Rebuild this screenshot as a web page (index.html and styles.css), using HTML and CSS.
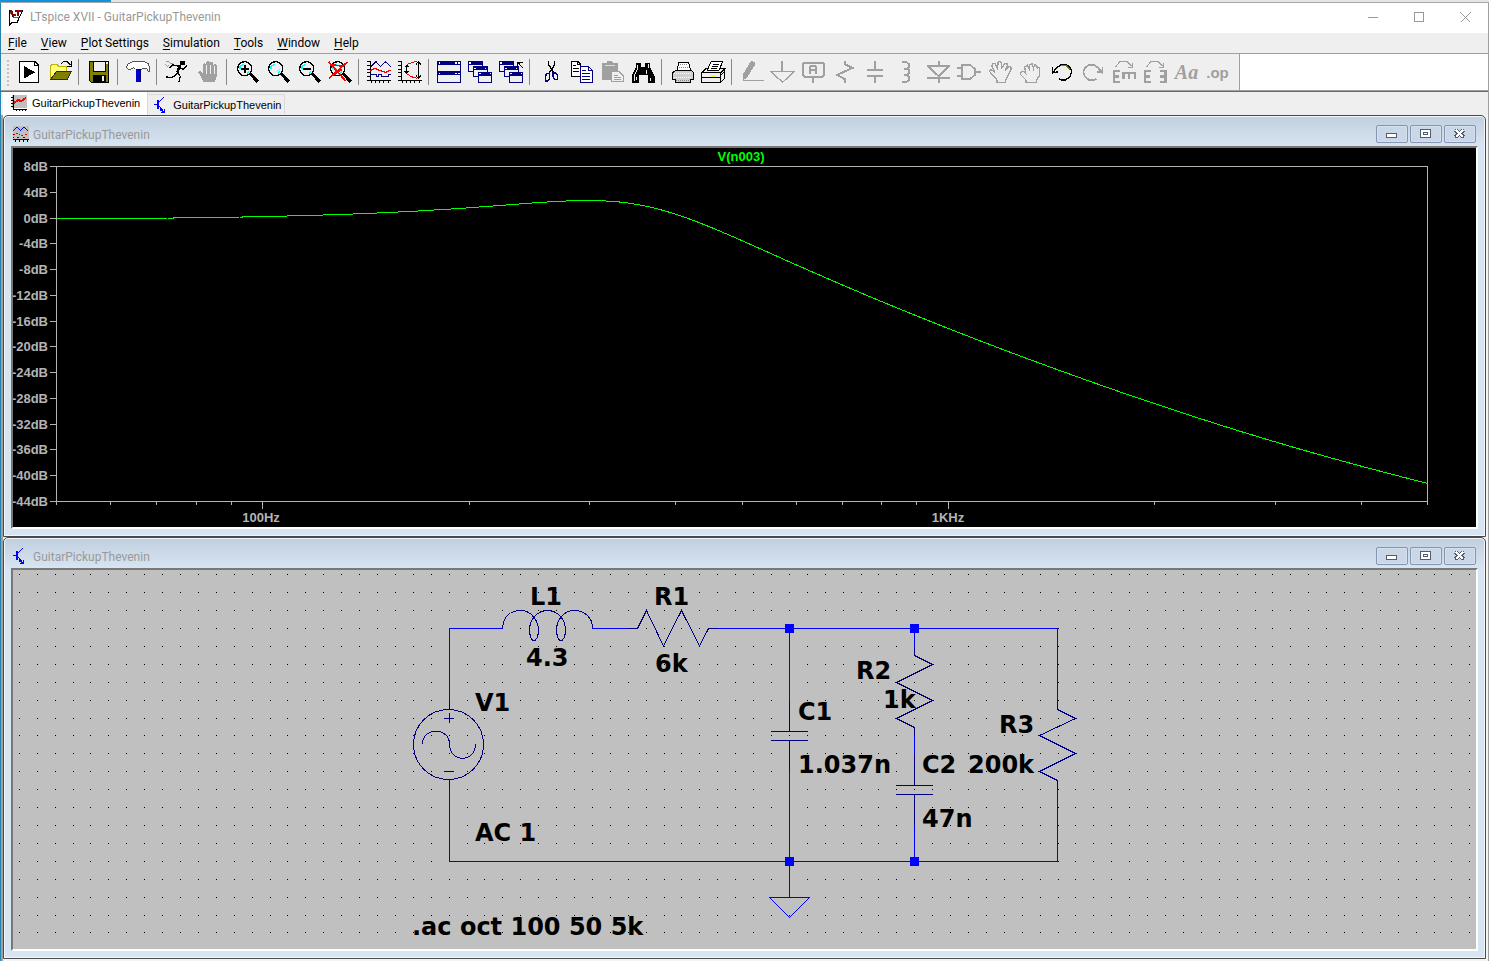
FILE: index.html
```html
<!DOCTYPE html>
<html lang="en">
<head>
<meta charset="utf-8">
<title>LTspice XVII - GuitarPickupThevenin</title>
<link rel="stylesheet" href="styles.css">
</head>
<body>
<div class="desktop-strip"><span class="desktop-accent"></span></div>
<div class="app">
  <header class="titlebar">
    <svg class="app-icon" viewBox="0 0 48 51"><path d="M3 2V49L14 39L28 39L44 3" fill="#fff" stroke="#000" stroke-width="3"/><path d="M9 3L15 20L24 17M21 7H42M32 7L28 22" fill="none" stroke="#8b0000" stroke-width="6"/><path d="M3 4L15 24L33 24" fill="none" stroke="#000" stroke-width="2"/></svg>
    <h1 class="app-title">LTspice XVII - GuitarPickupThevenin</h1>
    <div class="sys-buttons">
      <button aria-label="Minimize"><svg viewBox="0 0 11 11"><path d="M0 5.500H10"/></svg></button>
      <button aria-label="Maximize"><svg viewBox="0 0 11 11"><path d="M.5 .5H9.500V9.500H.5Z"/></svg></button>
      <button aria-label="Close"><svg viewBox="0 0 11 11"><path d="M.5 .5L10.500 10.500M10.500 .5L.5 10.500"/></svg></button>
    </div>
  </header>
  <nav class="menubar">
    <button><u>F</u>ile</button><button><u>V</u>iew</button><button><u>P</u>lot Settings</button><button><u>S</u>imulation</button><button><u>T</u>ools</button><button><u>W</u>indow</button><button><u>H</u>elp</button>
  </nav>
  <div class="toolbar-row">
    <div class="toolbar">
      <span class="grip"></span>
      <div class="group">
        <button aria-label="Run"><svg viewBox="42 0 93 105"><path d="M58 19H105L116 31V82H58Z" fill="#fff" stroke="#000" stroke-width="3"/><path d="M104 18V32H117" fill="none" stroke="#000" stroke-width="3"/><path d="M72 33V71L105 52Z"/></svg></button>
        <button aria-label="Open"><svg viewBox="135 0 93 105"><path d="M151 74V35L156 27H170L176 34H199V48H172Z" fill="#ffff80" stroke="#c0b000" stroke-width="3"/><path d="M151 74L171 48H215L202 74Z" fill="#808000" stroke="#303000" stroke-width="3"/><path d="M185 26L190 20H202L212 31M214 19V33H201" fill="none" stroke="#000" stroke-width="3"/></svg></button>
      </div>
      <div class="group">
        <button aria-label="Save"><svg viewBox="252 0 93 105"><path d="M268 19H326V81H273L268 76Z" fill="#808000" stroke="#000" stroke-width="3"/><path d="M279 19H316V48H279Z" fill="#efefef" stroke="#000" stroke-width="3"/><path d="M280 60H317V81H280Z"/><path d="M306 64H312V77H306Z" fill="#efefef"/><path d="M319 22H324V27H319Z" fill="#efefef"/></svg></button>
      </div>
      <div class="group">
        <button aria-label="Control panel"><svg viewBox="369 0 93 105"><path d="M408 38H424V81H408Z" fill="#00c"/><path d="M418 40H424V81H418Z" fill="#000080"/><path d="M379 36L385 27L398 19H432L444 25L449 36V48H445L438 39H430L424 43H407L402 38L396 40L387 46Z" fill="#fff" stroke="#000" stroke-width="2"/></svg></button>
      </div>
      <div class="group">
        <button aria-label="Run simulation"><svg viewBox="486 0 93 105"><path d="M541 19H555V30H541Z"/><path d="M542 28L532 54L522 64L511 68L497 65M532 53L541 64L537 81M541 34L518 30L509 40M541 38L550 44L561 32" fill="none" stroke="#000" stroke-width="4"/><path d="M541 32L531 53" stroke="#000" stroke-width="8"/><path d="M497 19H505L511 25H520M506 31L500 37M496 29L503 35" fill="none" stroke="#999" stroke-width="3"/></svg></button>
        <button aria-label="Halt"><svg viewBox="579 0 93 105"><path d="M609 80L600 59L594 51L599 47L609 56V29L614 24L618 28V47V23L624 18L629 22V47V24L635 20L640 24V47V30L645 27L650 31V64L645 81Z" fill="#a0a0a0"/><path d="M620 30V58M631 30V58M642 34V58" stroke="#efefef" stroke-width="3"/></svg></button>
      </div>
      <div class="group">
        <button aria-label="Zoom in"><svg viewBox="36 0 93 105"><use href="#lens"/><path d="M74 30V54M62 42H86" stroke="#000" stroke-width="6"/></svg></button>
        <button aria-label="Pan"><svg viewBox="36 0 93 105"><use href="#lens"/><path d="M78 52L88 41" stroke="#5ff" stroke-width="3"/></svg></button>
        <button aria-label="Zoom out"><svg viewBox="36 0 93 105"><use href="#lens"/><path d="M62 42H86" stroke="#000" stroke-width="6"/></svg></button>
        <button aria-label="Zoom to fit"><svg viewBox="36 0 93 105"><use href="#lens"/><path d="M47 20L97 77M103 21L48 70M51 29L94 34M58 62L86 44" fill="none" stroke="#f00" stroke-width="5"/></svg></button>
      </div>
      <div class="group">
        <button aria-label="Autorange"><svg viewBox="432 0 93 105"><use href="#axes"/><path d="M453 35L468 20L481 35L496 20L512 35" fill="none" stroke="#000080" stroke-width="3"/><path d="M450 47L465 40L478 46L496 52L512 45" fill="none" stroke="#f00" stroke-width="4"/><path d="M450 58H469V65H475V58H484V65H505V58H512" fill="none" stroke="#000080" stroke-width="3"/></svg></button>
        <button aria-label="Axis limits"><svg viewBox="525 0 93 105"><use href="#axes" x="93"/><path d="M595 20V70M588 28L595 20L603 28M588 62L595 70L603 62M560 31V54M554 37L560 31L566 37M554 48L560 54L566 48" fill="none" stroke="#000" stroke-width="3"/><path d="M562 28L575 23L591 18M562 57L574 65L591 70" fill="none" stroke="#f00" stroke-width="3"/></svg></button>
      </div>
      <div class="group">
        <button aria-label="Tile windows"><svg viewBox="12 0 93 105"><path d="M22 19H91V49H22ZM22 50H91V82H22Z" fill="#efefef" stroke="#000080" stroke-width="3"/><path d="M21 18H92V30H21ZM21 49H92V61H21Z" fill="#000080"/><path d="M26 22H31V26H26ZM75 22H80V26H75ZM84 22H89V26H84ZM26 53H31V57H26ZM75 53H80V57H75ZM84 53H89V57H84Z" fill="#fff"/></svg></button>
        <button aria-label="Cascade windows"><svg viewBox="105 0 93 105"><use href="#cascade"/></svg></button>
        <button aria-label="Close all windows"><svg viewBox="198 0 93 105"><use href="#cascade" x="93"/><path d="M251 16H282V32H251Z" fill="#efefef"/><path d="M278 21H263V36M264 22L278 39" fill="none" stroke="#000" stroke-width="3"/></svg></button>
      </div>
      <div class="group">
        <button aria-label="Cut"><svg viewBox="313 0 93 105"><path d="M354 18V29L362 42L370 52M372 18V29L364 42L355 52" fill="none" stroke="#000" stroke-width="4"/><path d="M346 58L352 54L357 58V70L351 78H345V66ZM367 54H375L381 62V73H373L367 66Z" fill="none" stroke="#000080" stroke-width="4"/></svg></button>
        <button aria-label="Copy"><svg viewBox="409 0 93 105"><path d="M424 19H444L452 27V65H424Z" fill="#fff" stroke="#000" stroke-width="3"/><path d="M430 30H440M430 39H448M430 48H448M443 19V28H452" fill="none" stroke="#000" stroke-width="3"/><path d="M451 34H476L488 46V81H451Z" fill="#fff" stroke="#000080" stroke-width="3"/><path d="M475 34V46H488M457 45H468M457 55H482M457 64H482M457 72H482" fill="none" stroke="#000080" stroke-width="3"/></svg></button>
        <button aria-label="Paste"><svg viewBox="502 0 93 105"><path d="M516 24H530L534 18H546L550 24H564V48H544V75H516Z" fill="#a0a0a0"/><path d="M526 30H555" stroke="#ddd" stroke-width="3"/><path d="M545 50H569L580 61V80H545Z" fill="#efefef" stroke="#a0a0a0" stroke-width="3"/><path d="M552 60H564M552 67H574M552 74H574" stroke="#a0a0a0" stroke-width="3"/></svg></button>
        <button aria-label="Find"><svg viewBox="595 0 93 105"><path d="M619 24H634V36H646V24H661V36L675 63V83H654V61H628V83H606V62L619 36Z"/><path d="M624 29V41L614 62V77M655 28V38M650 44V56M661 68V77M621 66V76" fill="none" stroke="#efefef" stroke-width="3"/></svg></button>
      </div>
      <div class="group">
        <button aria-label="Print setup"><svg viewBox="711 0 93 105"><path d="M742 45L746 23H776L782 45" fill="#fff" stroke="#000" stroke-width="3"/><path d="M728 53L738 45H783L790 52V73H782V82H736V73H728Z" fill="#d0d0d0" stroke="#000" stroke-width="3"/><path d="M739 75H780M749 29H772M748 37H776" stroke="#888" stroke-width="3" stroke-dasharray="3 3"/><path d="M732 56H786M732 68H786" stroke="#fff" stroke-width="3" stroke-dasharray="3 3"/></svg></button>
        <button aria-label="Print"><svg viewBox="804 0 93 105"><path d="M815 53L828 41H884L872 53ZM872 53L884 42V70L872 82ZM815 53H872V82H815Z" fill="#efefef" stroke="#000" stroke-width="3"/><path d="M832 45L843 20H878L867 45Z" fill="#fff" stroke="#000" stroke-width="3"/><path d="M849 27H868M846 33H865M842 39H862M815 67H872M872 60L884 49" stroke="#000" stroke-width="3"/><path d="M843 63H858" stroke="#ff0" stroke-width="4"/></svg></button>
      </div>
      <div class="group">
        <button aria-label="Wire"><svg viewBox="36 0 93 105"><path d="M54 76V58L76 20L83 18L90 23L89 31L67 67Z" fill="#a0a0a0"/><path d="M54 76H117" stroke="#a0a0a0" stroke-width="3"/></svg></button>
        <button aria-label="Ground"><svg class="gray" viewBox="129 0 93 105"><path d="M171 18V50" stroke-width="5"/><path d="M138 50H206L173 82Z" stroke-width="4"/></svg></button>
        <button aria-label="Label net"><svg class="gray" viewBox="222 0 93 105"><rect x="234" y="23" width="63" height="42" rx="6" stroke-width="6"/><path d="M264 65V84M255 57V36L260 32H268L273 36V57M255 45H273" stroke-width="6"/></svg></button>
        <button aria-label="Resistor"><svg class="gray" viewBox="315 0 93 105"><path d="M360 18V28L382 39L336 60L359 72V83" stroke-width="6"/></svg></button>
        <button aria-label="Capacitor"><svg class="gray" viewBox="408 0 93 105"><path d="M450 18V45M450 62V83" stroke-width="6"/><path d="M426 45H474M426 62H474" stroke-width="7"/></svg></button>
        <button aria-label="Inductor"><svg class="gray" viewBox="501 0 93 105"><path d="M532 21H544L552 28V36L546 41H537H546L552 45V55L546 60H537H546L552 65V75L545 80H532" stroke-width="6"/></svg></button>
        <button aria-label="Diode"><svg class="gray" viewBox="594 0 93 105"><path d="M642 18V32M642 68V83M606 33H675M609 34L642 64L672 34M606 69H675" stroke-width="6"/></svg></button>
        <button aria-label="Component"><svg class="gray" viewBox="687 0 93 105"><path d="M710 29H735L749 42V60L735 73H710ZM696 39H710M696 63H710M749 51H768" stroke-width="6"/></svg></button>
        <button aria-label="Move"><svg class="gray" viewBox="-3 0 93 105"><path d="M33 82V75L24 64L11 50L13 44L22 48L27 52L18 34L19 25L26 25L35 41L36 22L42 19L47 25L46 42L56 25L63 25L64 32L57 46L68 35L74 35L76 42L67 59L59 75V82Z" stroke-width="4"/></svg></button>
        <button aria-label="Drag"><svg class="gray" viewBox="93 0 93 105"><path d="M123 82V75L107 59L108 52L115 49L122 55L119 36L127 31L132 40L134 28L142 27L145 39L149 30L155 31L157 41L161 37L164 42V61L155 75V82ZM133 38V49M145 39V49" stroke-width="4"/></svg></button>
        <button aria-label="Undo"><svg viewBox="186 0 93 105"><path d="M203 37V54L220 50M203 53L216 38L229 29H245L257 40L260 51L255 65L242 75H228L222 71" fill="none" stroke="#000" stroke-width="4"/><path d="M228 32H244L255 43" fill="none" stroke="#808000" stroke-width="3"/></svg></button>
        <button aria-label="Redo"><svg class="gray" viewBox="279 0 93 105"><path d="M352 37V53L337 50M352 53L339 38L326 29H311L299 40L295 51L300 65L312 75H328L334 71" stroke-width="5"/></svg></button>
        <button aria-label="Rotate"><svg class="gray" viewBox="372 0 93 105"><path d="M404 48H386V80H404M386 64H402" stroke-width="7"/><path d="M411 54H453M415 54V73M432 54V71M450 54V73" stroke-width="7"/><path d="M391 37L404 20H427L440 34M442 23V36H430" stroke-width="3"/></svg></button>
        <button aria-label="Mirror"><svg class="gray" viewBox="465 0 93 105"><path d="M497 48H479V80H497M479 64H495M524 48H541V80H524M541 64H526" stroke-width="7"/><path d="M484 37L497 20H520L533 34M535 23V36H523" stroke-width="3"/></svg></button>
        <button class="glyph glyph-text" aria-label="Text">Aa</button>
        <button class="glyph" aria-label="SPICE directive">.op</button>
      </div>
    </div>
  </div>
  <div class="tabs" role="tablist">
    <button class="tab active" role="tab" aria-selected="true"><svg viewBox="0 0 16 16"><path d="M1 0H16V13H1Z" fill="#c0c0c0"/><path d="M2.500 0V14.500H16M0 2.500H3M0 5.500H3M0 8.500H3M0 11.500H3M5.500 14V16M8.500 14V16M11.500 14V16M14.500 14V16" fill="none" stroke="#000"/><path d="M3 8L7 5L10 6L15 3" fill="none" stroke="#f00" stroke-width="2"/></svg>GuitarPickupThevenin</button>
    <button class="tab" role="tab" aria-selected="false"><svg viewBox="0 0 16 16"><use href="#transistor"/></svg>GuitarPickupThevenin</button>
  </div>
  <main class="workspace">
    <section class="child">
      <header class="child-title">
        <svg class="child-icon" viewBox="0 0 16 16"><path d="M0 0H16V13H0Z" fill="#c0c0c0"/><path d="M0 4.500H1M1 3.500H2M2 2.500H3M3 1.500H5M5 2.500H6M6 3.500H7M7 4.500H8M8 3.500H9M9 2.500H10M10 1.500H12M12 2.500H13M13 3.500H14M14 4.500H15" stroke="#00f"/><path d="M3 7.500H5M1 8.500H2M6 8.500H7M8 9.500H10M12 8.500H14" stroke="#f00"/><path d="M4 11.500H6M10 11.500H12" stroke="#00f"/><path d="M0 13.500H16M2.500 13V16M6.500 13V16M10.500 13V16M14.500 13V16M0 8.500H1M0 11.500H1" stroke="#000"/></svg>
        <h2>GuitarPickupThevenin</h2>
        <div class="child-buttons"><button aria-label="Minimize"><svg viewBox="0 0 30 16"><use href="#c-min"/></svg></button><button aria-label="Restore"><svg viewBox="0 0 30 16"><use href="#c-max"/></svg></button><button aria-label="Close"><svg viewBox="0 0 30 16"><use href="#c-close"/></svg></button></div>
      </header>
      <div class="client plot">
        <svg class="canvas" viewBox="13 148 1463 379" preserveAspectRatio="none" role="img" aria-label="V(n003) frequency response">
          <path d="M56.500 166.500H1427.500V501.500H56.500Z" fill="none" stroke="#b4b4b4"/>
          <g id="axis" fill="#b4b4b4"></g>
          <path id="trace" fill="none" stroke="#0f0"/>
          <text x="741" y="161" text-anchor="middle" fill="#0f0">V(n003)</text>
        </svg>
      </div>
    </section>
    <section class="child">
      <header class="child-title">
        <svg class="child-icon" viewBox="0 0 16 16"><use href="#transistor"/></svg>
        <h2>GuitarPickupThevenin</h2>
        <div class="child-buttons"><button aria-label="Minimize"><svg viewBox="0 0 30 16"><use href="#c-min"/></svg></button><button aria-label="Restore"><svg viewBox="0 0 30 16"><use href="#c-max"/></svg></button><button aria-label="Close"><svg viewBox="0 0 30 16"><use href="#c-close"/></svg></button></div>
      </header>
      <div class="client schematic">
        <svg class="canvas" viewBox="13 570 1463 379" role="img" aria-label="Guitar pickup schematic">
          <path id="dots" fill="#000"/>
          <g class="wire">
            <path d="M449.500 700V628.500H503M592 628.500H629M717 628.500H1057.500V701M1057.500 788V861.500H449.500V788M789.500 628V701M789.500 770V897M914.500 628V648M914.500 735V754M914.500 824V861M769.500 897.500H809.500L789.500 917.500Z"/>
          </g>
          <g class="part">
            <path d="M502.500 628C503.500 616 511 610.500 521 610.500C532 610.500 538.500 622 538.500 630C538.500 636 536 641 534 641C532 641 529.500 636 529.500 630C529.500 620 537 610.500 547.500 610.500C558 610.500 565.500 620 565.500 630C565.500 636 563 641 561 641C559 641 556.500 636 556.500 630C556.500 620 564 610.500 574 610.500C584 610.500 592.500 617 592.500 628"/>
            <path d="M628 628.500H637.500L646.500 610.500L663.500 646L681.500 610.500L699.500 646L708.500 628.500H718"/>
            <circle cx="448.500" cy="744.500" r="35"/>
            <path d="M449.500 700V709M449.500 780V788M444 718.500H454M449.500 713V723M444 771.500H454M422.500 744C422.500 727 449.500 727 449.500 744C449.500 763 475.500 763 475.500 744"/>
            <path d="M789.500 700V731.500M771 731.500H808M771 740.500H808M789.500 740V770M914.500 754V785.500M896 785.500H933M896 794.500H933M914.500 794V825"/>
            <path d="M914.500 648V655.500L932.500 664.500L896.500 682.500L932.500 700.500L896.500 718.500L914.500 727.500V736M1057.500 700V709.500L1075.500 718.500L1039.500 735.500L1075.500 753.500L1039.500 771.500L1057.500 780.500V789"/>
          </g>
          <path d="M785 624H794V633H785ZM910 624H919V633H910ZM785 857H794V866H785ZM910 857H919V866H910Z" fill="#00f"/>
          <g class="label">
            <text x="530" y="605">L1</text><text x="526" y="666">4.3</text><text x="654" y="605">R1</text><text x="655" y="672">6k</text>
            <text x="475" y="711">V1</text><text x="475" y="841">AC 1</text><text x="412" y="935">.ac oct 100 50 5k</text>
            <text x="798" y="720">C1</text><text x="798" y="773">1.037n</text><text x="856" y="679">R2</text><text x="883" y="708">1k</text>
            <text x="922" y="773">C2</text><text x="922" y="827">47n</text><text x="999" y="733">R3</text><text x="968" y="773">200k</text>
          </g>
        </svg>
      </div>
    </section>
  </main>
</div>
<svg class="symbols" aria-hidden="true">
  <defs>
    <g id="lens"><path d="M90 56L113 80" stroke="#000" stroke-width="9"/><circle cx="74" cy="41" r="21" fill="#efefef" stroke="#000" stroke-width="4"/><path d="M60 41V35L70 27M80 56L88 49" fill="none" stroke="#0ff" stroke-width="4"/></g>
    <g id="axes"><path d="M450 18V77H513M441 20H450M441 31H450M441 42H450M441 53H450M441 64H450M441 76H450M454 77V83M465 77V83M478 77V83M491 77V83M505 77V83" fill="none" stroke="#000" stroke-width="3"/></g>
    <g id="cascade"><path d="M115 19H156V49H115Z" fill="#efefef" stroke="#000080" stroke-width="3"/><path d="M114 18H158V30H114Z" fill="#000080"/><path d="M130 35H171V65H130Z" fill="#efefef" stroke="#000080" stroke-width="3"/><path d="M129 34H172V46H129Z" fill="#000080"/><path d="M144 51H185V81H144Z" fill="#efefef" stroke="#000080" stroke-width="3"/><path d="M143 50H187V62H143Z" fill="#000080"/><path d="M118 22H123V26H118ZM132 38H137V42H132ZM147 54H152V58H147ZM180 54H184V58H180ZM165 38H169V42H165Z" fill="#fff"/></g>
    <g id="transistor"><path d="M0 7.500H4" stroke="#00f"/><path d="M3 3H5V12H3Z" fill="#00f"/><path d="M5 5L10 0M5 9L10 15M7 15L10 15V12" fill="none" stroke="#00f" stroke-width="1"/><path d="M6 12L9 14" stroke="#00f" stroke-width="2"/></g>
    <g id="c-min"><rect x="9.500" y="7.500" width="10" height="4" rx="1" fill="#fff" stroke="#555b6e"/></g>
    <g id="c-max"><rect x="9.500" y="3.500" width="10" height="8" rx="1" fill="#fff" stroke="#555b6e"/><path d="M12.500 6.500H16.500V8.500H12.500Z" fill="none" stroke="#555b6e"/></g>
    <g id="c-close"><path d="M10 4L19 11M19 4L10 11" stroke="#555b6e" stroke-width="4"/><path d="M11 4L18 11M18 4L11 11" stroke="#fff" stroke-width="2"/></g>
  </defs>
</svg>
<script src="app.js"></script>
</body>
</html>
```
FILE: styles.css
```css
* { box-sizing: border-box; }
body {
  margin: 0;
  height: 100vh;
  display: flex;
  flex-direction: column;
  background: #fff;
  font-family: Roboto, "Open Sans", sans-serif;
  font-size: 12px;
  color: #000;
}
button { border: 0; padding: 0; margin: 0; background: none; font: inherit; color: inherit; }
h1, h2 { margin: 0; font-size: 12px; font-weight: 400; color: #999; }
svg { display: block; shape-rendering: crispEdges; }
.symbols { position: absolute; width: 0; height: 0; }

.desktop-strip { height: 2px; background: #e5e5e5; flex: none; }
.desktop-accent { display: block; width: 111px; height: 2px; background: #0c94dc; }
.app {
  flex: 1;
  min-height: 0;
  display: flex;
  flex-direction: column;
  border-top: 1px solid #a8a8a8;
  border-left: 1px solid #2783ae;
  border-right: 1px solid #a0a0a0;
}
.titlebar { height: 30px; flex: none; display: flex; align-items: center; padding: 0 0 2px 7px; }
.app-icon { width: 16px; height: 17px; margin-right: 6px; }
.app-title { flex: 1; }
.sys-buttons { display: flex; }
.sys-buttons button { width: 46px; height: 28px; display: grid; place-items: center; }
.sys-buttons svg { width: 11px; height: 11px; fill: none; stroke: #999; }

.menubar {
  height: 21px;
  flex: none;
  display: flex;
  align-items: center;
  gap: 14px;
  padding-left: 7px;
  background: #efefef;
  border-bottom: 1px solid #a0a0a0;
}
.menubar u { text-underline-offset: 2px; }

.toolbar-row { flex: none; border-bottom: 1px solid #696969; }
.toolbar-row::after { content: ""; display: block; height: 1px; background: #a0a0a0; }
.toolbar { display: flex; width: max-content; height: 36px; padding-right: 6px; background: #efefef; border-right: 1px solid #a0a0a0; }
.grip {
  width: 2px;
  margin: 6px 5px 0 6px;
  height: 28px;
  background: repeating-linear-gradient(#c0c0c0 0 2px, #efefef 2px 4px);
}
.group { display: flex; }
.group + .group::before { content: ""; width: 1px; height: 26px; margin: 5px 5px 0 2px; background: #868686; }
.group button { width: 31px; height: 35px; margin-top: 1px; }
.group svg { width: 31px; height: 35px; overflow: hidden; }
.gray { fill: none; stroke: #a0a0a0; }
.group .glyph { color: #a0a0a0; font: bold 15px "Liberation Sans", sans-serif; }
.group .glyph-text { font: italic bold 20px "Liberation Serif", serif; }

.tabs { height: 23px; flex: none; display: flex; align-items: flex-start; padding-left: 2px; background: #efefef; font: 11px "Liberation Sans", Arial, sans-serif; }
.tab { display: flex; align-items: center; height: 20px; margin-top: 2px; padding: 0 3px 0 6px; gap: 3px; border: 1px solid #d9d9d9; border-left: 0; border-bottom: 0; }
.tab.active { height: 23px; margin-top: 0; padding: 0 7px 2px 8px; gap: 5px; background: #fff; border-top: 0; }
.tab svg { width: 16px; height: 16px; }

.workspace { flex: 1; min-height: 0; display: flex; flex-direction: column; padding: 0 2px 2px 0; border-left: 2px solid #a0a0a0; background: #f4f4f4; }
.child {
  flex: 1;
  min-height: 0;
  display: flex;
  flex-direction: column;
  padding: 0 7px 7px;
  border: 1px solid #4a4a4a;
  border-radius: 5px 5px 0 0;
  box-shadow: inset 0 0 0 1px #f3f7fb;
  background: linear-gradient(#c0cfde 0, #d7e4f2 30px);
}
.child-title { flex: none; height: 30px; display: flex; align-items: center; padding: 0 2px; }
.child-icon { width: 16px; height: 16px; margin: 5px 4px 0 0; }
.child-title h2 { flex: 1; padding-top: 7px; }
.child-buttons { display: flex; gap: 2px; padding-top: 6px; }
.child-buttons button { width: 32px; height: 18px; border: 1px solid #8795b5; border-radius: 2px; background: #c9d7e6; box-shadow: inset 0 0 0 1px #d5e0ec; }
.child-buttons svg { width: 30px; height: 16px; }
.client {
  flex: 1;
  min-height: 0;
  border: 2px solid;
  border-color: #777 #fff #fff #777;
}
.canvas { width: 100%; height: 100%; }
.plot { background: #000; }
.plot text { font: bold 13px "Liberation Sans", Arial, sans-serif; }
.schematic { background: #c0c0c0; }
.wire { fill: none; stroke: #00f; }
.part { fill: none; stroke: #000080; }
.label { font: bold 24px "DejaVu Sans", Verdana, sans-serif; }
```
FILE: app.js
```js
const SVG = "http://www.w3.org/2000/svg";

// Axis ticks and labels
const axis = document.getElementById("axis");
function tick(x, y, w, h) {
  const r = document.createElementNS(SVG, "rect");
  Object.entries({ x, y, width: w, height: h }).forEach(([k, v]) => r.setAttribute(k, v));
  axis.append(r);
}
function label(x, y, anchor, text) {
  const t = document.createElementNS(SVG, "text");
  t.setAttribute("x", x);
  t.setAttribute("y", y);
  t.setAttribute("text-anchor", anchor);
  t.textContent = text;
  axis.append(t);
}
const yOf = db => 166.5 + (8 - db) * 335 / 52;
const xOf = f => 56.5 + Math.log10(f / 50) * 685.5;
for (let db = 8; db >= -44; db -= 4) {
  const y = Math.floor(yOf(db));
  tick(50, y, 7, 1);
  label(48, y + 5, "end", db + "dB");
}
for (const f of [50, 60, 70, 80, 90, 100, 200, 300, 400, 500, 600, 700, 800, 900, 1000, 2000, 3000, 4000, 5000]) {
  tick(Math.floor(xOf(f)), 501, 1, f === 100 || f === 1000 ? 8 : 4);
}
label(261, 522, "middle", "100Hz");
label(948, 522, "middle", "1KHz");

// AC response of the network, 50 Hz to 5 kHz
function gain(f) {
  const w = 2 * Math.PI * f;
  const xc = -1 / (w * 47e-9);
  const m = 1e6 + xc * xc;
  const g = 1 / 200e3 + 1000 / m;
  const b = w * 1.037e-9 - xc / m;
  const re = 1 + 6000 * g - w * 4.3 * b;
  const im = 6000 * b + w * 4.3 * g;
  return -10 * Math.log10(re * re + im * im);
}
let d = "";
for (let x = 56; x <= 1427; x += 3) {
  const f = 50 * Math.pow(10, (x - 56) / 685.5);
  d += (d ? "L" : "M") + (x + 0.5) + " " + yOf(gain(f)).toFixed(1);
}
document.getElementById("trace").setAttribute("d", d);

// Schematic grid
let dots = "";
for (let j = 0; j < 21; j++) {
  for (let i = 0; i < 82; i++) {
    dots += `M${Math.floor(19.28 + 17.909 * i)} ${Math.floor(574.75 + 17.909 * j)}h1v1h-1z`;
  }
}
document.getElementById("dots").setAttribute("d", dots);
```
